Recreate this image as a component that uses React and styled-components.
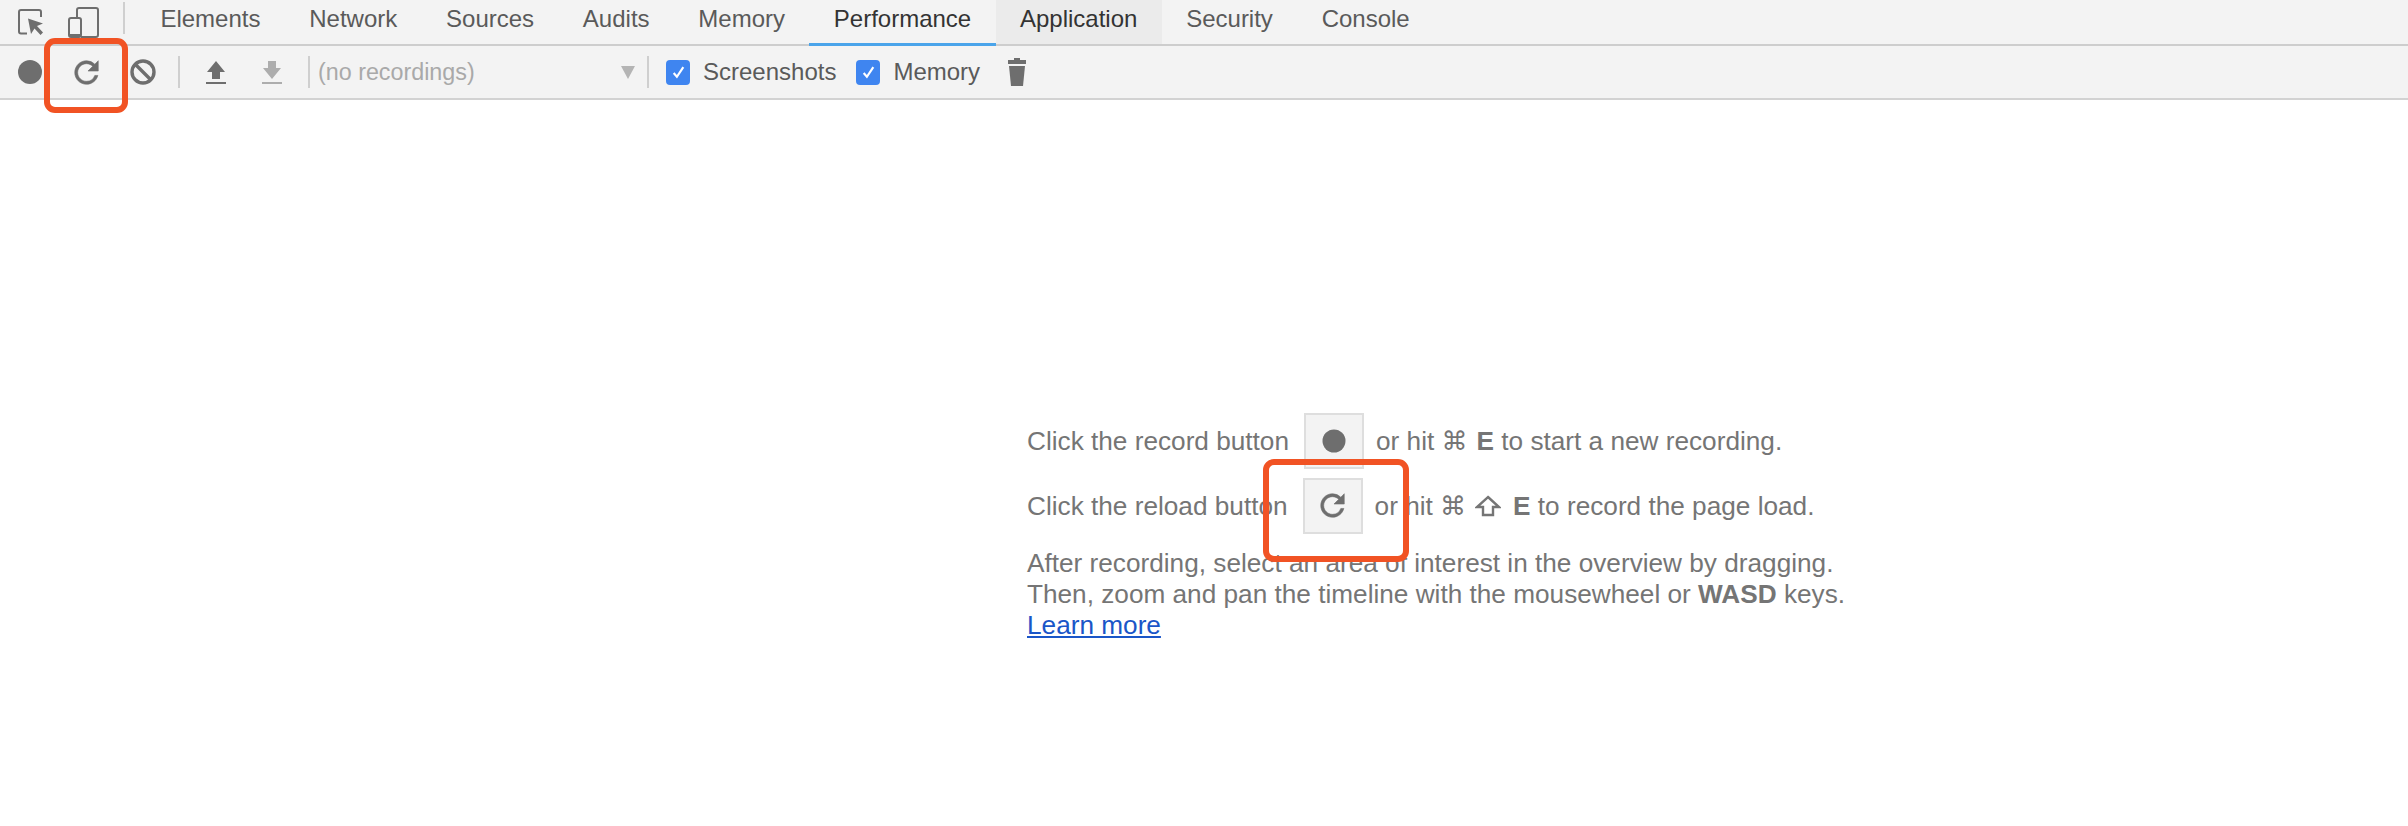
import styled, { createGlobalStyle } from 'styled-components';

const GlobalStyle = createGlobalStyle`
  html, body {
    margin: 0;
    padding: 0;
    background: #fff;
    font-family: "Liberation Sans", Arial, sans-serif;
  }
`

const Page = styled.div`
  position: relative;
  width: 2408px;
  height: 826px;
  overflow: hidden;
  background: #fff;
`

const TabBar = styled.div`
  display: flex;
  align-items: stretch;
  height: 44px;
  background: #f3f3f3;
  border-bottom: 2px solid #cdcdcd;
`

const IconSlot = styled.div`
  display: flex;
  align-items: center;
  justify-content: center;
  flex: none;
  width: ${props => props.$w}px;
  margin-left: ${props => props.$ml || 0}px;
`

const TabDivider = styled.div`
  width: 2px;
  height: 32px;
  margin: 2px 11px 0 0;
  background: #cfcfcf;
`

const Tab = styled.div`
  position: relative;
  display: flex;
  align-items: center;
  padding: 0 24.400px 7px;
  font-size: 24px;
  color: ${props => props.$active || props.$hover ? '#333' : '#5a5a5a'};
  background: ${props => props.$hover ? '#ebebeb' : 'transparent'};

  &::after {
    content: "";
    display: ${props => props.$active ? 'block' : 'none'};
    position: absolute;
    left: 0;
    right: 0;
    bottom: -2px;
    height: 3px;
    background: #4aa4ea;
  }
`

const Toolbar = styled.div`
  display: flex;
  align-items: center;
  height: 52px;
  background: #f3f3f3;
  border-bottom: 2px solid #d2d2d2;
`

const Divider = styled.div`
  flex: none;
  width: 2px;
  height: 32px;
  margin: 0 ${props => props.$mr || 0}px 0 ${props => props.$ml || 0}px;
  background: #cfcfcf;
`

const Select = styled.div`
  display: flex;
  align-items: center;
  justify-content: space-between;
  flex: none;
  width: 337px;
  padding: 0 12px 0 8px;
  box-sizing: border-box;
  font-size: 23.300px;
  color: #a9a9a9;
`

const Arrow = styled.div`
  width: 0;
  height: 0;
  border-left: 7px solid transparent;
  border-right: 7px solid transparent;
  border-top: 13px solid #b4b4b4;
`

const Check = styled.label`
  display: flex;
  align-items: center;
  flex: none;
  gap: 13px;
  margin-left: ${props => props.$ml}px;
  font-size: 24px;
  color: #5a5a5a;
`

const CheckBox = styled.span`
  display: flex;
  align-items: center;
  justify-content: center;
  width: 24px;
  height: 25px;
  border-radius: 4px;
  background: #3f85f0;
`

const Main = styled.div`
  padding: 312px 0 0 1027px;
  font-size: 26.200px;
  color: #757575;
`

const Row = styled.div`
  display: flex;
  align-items: center;
  height: 56px;
  margin-bottom: 8px;
  padding-top: 1px;
  white-space: pre;
`

const KeyButton = styled.div`
  display: flex;
  align-items: center;
  justify-content: center;
  box-sizing: border-box;
  width: 60px;
  height: 56px;
  margin: -1px 12px 0 15px;
  background: #f3f3f3;
  border: 2px solid #dedede;
`

const Glyph = styled.span`
  font-family: "DejaVu Sans", sans-serif;
  font-size: 26px;
  margin-right: 9px;
`

const ShiftSlot = styled.span`
  display: flex;
  margin-right: 12px;
`

const Hint = styled.div`
  margin-top: 14px;
  line-height: 31px;
  white-space: pre;
`

const LearnMore = styled.a`
  color: #1a56c8;
  text-decoration: underline;
`

const Callout = styled.div`
  position: absolute;
  left: ${props => props.$x}px;
  top: ${props => props.$y}px;
  width: ${props => props.$w}px;
  height: ${props => props.$h}px;
  box-sizing: border-box;
  border: 6px solid #f15324;
  border-radius: 11px;
`

const Svg = ({ w, h, children }) => (
  <svg width={w} height={h} viewBox={`0 0 ${w} ${h}`} style={{ display: 'block' }}>{children}</svg>
);

const InspectIcon = () => (
  <Svg w={26} h={26}>
    <path d="M9 24.500H3a2 2 0 0 1-2-2V3a2 2 0 0 1 2-2h18a2 2 0 0 1 2 2v5" fill="none" stroke="#6e6e6e" strokeWidth="2" />
    <path d="M10 9.500l15 5-6 2.500 6 6.500-2.500 2.500-6-6.500L13 25z" fill="#6e6e6e" />
  </Svg>
);

const DeviceIcon = () => (
  <Svg w={31} h={31}>
    <path d="M9 10V3a2 2 0 0 1 2-2h17a2 2 0 0 1 2 2v25a2 2 0 0 1-2 2H13" fill="none" stroke="#6e6e6e" strokeWidth="2" />
    <rect x="1" y="11" width="12" height="19" rx="2" fill="none" stroke="#6e6e6e" strokeWidth="2" />
    <rect x="1" y="27" width="12" height="3" fill="#6e6e6e" />
  </Svg>
);

const RecordIcon = ({ r = 12 }) => (
  <Svg w={24} h={24}><circle cx="12" cy="12" r={r} fill="#6e6e6e" /></Svg>
);

const ReloadIcon = () => (
  <svg width="25" height="25" viewBox="3.500 3.500 17 17" style={{ display: 'block' }}>
    <path
      d="M17.650 6.350A7.958 7.958 0 0 0 12 4c-4.420 0-7.990 3.580-7.990 8s3.570 8 7.990 8c3.730 0 6.840-2.550 7.730-6h-2.080A5.990 5.990 0 0 1 12 18c-3.310 0-6-2.690-6-6s2.690-6 6-6c1.660 0 3.140.690 4.220 1.780L13 11h7V4l-2.350 2.350z"
      fill="#6e6e6e"
      stroke="#6e6e6e"
      strokeWidth="0.400"
    />
  </svg>
);

const ClearIcon = () => (
  <Svg w={26} h={26}>
    <circle cx="13" cy="13" r="11" fill="none" stroke="#6e6e6e" strokeWidth="3.400" />
    <path d="M6 6l14 14" stroke="#6e6e6e" strokeWidth="3.400" />
  </Svg>
);

const LoadIcon = ({ color }) => (
  <Svg w={20} h={24}>
    <path d="M10 1l9 11h-5v7H6v-7H1z" fill={color} />
    <rect y="22" width="20" height="2" fill={color} />
  </Svg>
);

const SaveIcon = ({ color }) => (
  <Svg w={20} h={24}>
    <path d="M6 1h8v7h5l-9 11L1 8h5z" fill={color} />
    <rect y="22" width="20" height="2" fill={color} />
  </Svg>
);

const TrashIcon = () => (
  <Svg w={20} h={28}>
    <path d="M7 0h6v2h6v4H1V2h6z" fill="#6e6e6e" />
    <path d="M2 8h16l-2 20H4z" fill="#6e6e6e" />
  </Svg>
);

const ShiftIcon = () => (
  <Svg w={26} h={22}>
    <path d="M13 2L24 12h-6v8H8v-8H2z" fill="none" stroke="#757575" strokeWidth="2.400" strokeLinejoin="miter" />
  </Svg>
);

const Tick = () => (
  <svg width="15" height="15" viewBox="0 0 14 14" style={{ display: 'block' }}>
    <path d="M2.500 7.500l3 3.500 6-9" fill="none" stroke="#fff" strokeWidth="2" />
  </svg>
);

const tabs = ['Elements', 'Network', 'Sources', 'Audits', 'Memory', 'Performance', 'Application', 'Security', 'Console'];

const App = () => {
  return (
    <Page>
      <GlobalStyle />
      <TabBar>
        <IconSlot $w={61}><InspectIcon /></IconSlot>
        <IconSlot $w={40} $ml={2}><DeviceIcon /></IconSlot>
        <IconSlot $w={20} />
        <TabDivider />
        {tabs.map((t) => (
          <Tab key={t} $active={t === 'Performance'} $hover={t === 'Application'}>{t}</Tab>
        ))}
      </TabBar>

      <Toolbar>
        <IconSlot $w={60}><RecordIcon /></IconSlot>
        <IconSlot $w={52}><ReloadIcon /></IconSlot>
        <IconSlot $w={62}><ClearIcon /></IconSlot>
        <Divider $ml={4} $mr={8} />
        <IconSlot $w={56}><LoadIcon color="#6e6e6e" /></IconSlot>
        <IconSlot $w={56}><SaveIcon color="#adadad" /></IconSlot>
        <Divider $ml={8} />
        <Select>(no recordings)<Arrow /></Select>
        <Divider />
        <Check $ml={17}><CheckBox><Tick /></CheckBox>Screenshots</Check>
        <Check $ml={20}><CheckBox><Tick /></CheckBox>Memory</Check>
        <IconSlot $w={20} $ml={27}><TrashIcon /></IconSlot>
      </Toolbar>

      <Main>
        <Row>
          Click the record button
          <KeyButton><RecordIcon r={11.500} /></KeyButton>
          or hit <Glyph>⌘</Glyph><b>E</b> to start a new recording.
        </Row>
        <Row>
          Click the reload button
          <KeyButton><ReloadIcon /></KeyButton>
          or hit <Glyph>⌘</Glyph><ShiftSlot><ShiftIcon /></ShiftSlot><b>E</b> to record the page load.
        </Row>
        <Hint>
          After recording, select an area of interest in the overview by dragging.{'\n'}
          Then, zoom and pan the timeline with the mousewheel or <b>WASD</b> keys.{'\n'}
          <LearnMore href="#">Learn more</LearnMore>
        </Hint>
      </Main>

      <Callout $x={44} $y={38} $w={84} $h={75} />
      <Callout $x={1263} $y={459} $w={146} $h={103} />
    </Page>
  );
};

export default App;
